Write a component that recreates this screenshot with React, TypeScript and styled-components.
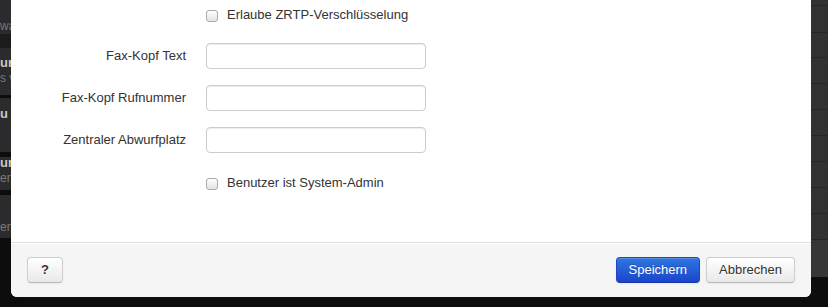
import React from "react";
import styled, { createGlobalStyle } from "styled-components";

const GlobalStyle = createGlobalStyle`
  html, body {
    margin: 0;
    padding: 0;
    width: 828px;
    height: 307px;
    overflow: hidden;
    background: #0d0d0d;
    font-family: "Liberation Sans", Arial, Helvetica, sans-serif;
  }
  * { box-sizing: border-box; }
`;

const Page = styled.div`
  display: flex;
  align-items: flex-start;
  width: 828px;
  height: 307px;
`;

/* ---------- background list behind the modal ---------- */
const LeftStrip = styled.div`
  width: 11px;
  flex: none;
  display: flex;
  flex-direction: column;
  overflow: hidden;
`;

const Band = styled.div<{ $h: number; $tone: "row" | "dark" | "black"; $pb?: number }>`
  height: ${(p) => p.$h}px;
  flex: none;
  background: ${(p) =>
    p.$tone === "row" ? "#2b2b2d" : p.$tone === "dark" ? "#1c1c1d" : "#0d0d0d"};
  display: flex;
  flex-direction: column;
  justify-content: flex-end;
  padding-bottom: ${(p) => p.$pb ?? 0}px;
  overflow: hidden;
  white-space: nowrap;
`;

const BandTitle = styled.div`
  font-size: 13px;
  font-weight: bold;
  line-height: 16px;
  color: #c8c8c8;
`;

const BandSub = styled.div`
  font-size: 12px;
  line-height: 15px;
  color: #7a7a7a;
`;

const RightStrip = styled.div`
  width: 17px;
  flex: none;
  display: flex;
  flex-direction: column;
`;

const ListRow = styled.div<{ $h: number }>`
  height: ${(p) => p.$h}px;
  background: #313132;
  border-bottom: 1px solid #262627;
`;

const ListFoot = styled.div`
  height: 37px;
  background: #363637;
`;

/* ---------- modal ---------- */
const Modal = styled.div`
  width: 800px;
  flex: none;
  background: #fff;
  border-radius: 0 0 6px 6px;
  display: flex;
  flex-direction: column;
  overflow: hidden;
`;

const Body = styled.div`
  height: 242px;
  padding: 6px 15px 0 15px;
  display: flex;
  flex-direction: column;
  color: #333;
  font-size: 13px;
`;

const CheckRow = styled.label<{ $mt: number }>`
  display: flex;
  align-items: center;
  gap: 9px;
  margin-top: ${(p) => p.$mt}px;
  padding-left: 180px;
  line-height: 18px;
  height: 18px;
  color: #333;
`;

const Box = styled.span`
  width: 12px;
  height: 12px;
  flex: none;
  border: 1px solid #a9a9a9;
  border-radius: 3px;
  background: linear-gradient(#ffffff, #e4e4e4);
  box-shadow: 0 1px 0 rgba(255, 255, 255, 0.6);
  margin-top: 1px;
`;

const FieldRow = styled.div<{ $mt: number }>`
  display: flex;
  align-items: center;
  margin-top: ${(p) => p.$mt}px;
  height: 26px;
`;

const Label = styled.div`
  width: 160px;
  margin-right: 20px;
  text-align: right;
  font-size: 13px;
  line-height: 26px;
  color: #333;
  white-space: nowrap;
`;

const Input = styled.input`
  width: 220px;
  height: 26px;
  padding: 4px 6px;
  border: 1px solid #cccccc;
  border-radius: 4px;
  background: #fff;
  box-shadow: inset 0 1px 1px rgba(0, 0, 0, 0.075);
  font-family: inherit;
  font-size: 13px;
  color: #555;
  outline: none;
`;

const Footer = styled.div`
  height: 55px;
  border-top: 1px solid #dddddd;
  background: #f5f5f5;
  box-shadow: inset 0 1px 0 #ffffff;
  padding: 14px 16px 14px 16px;
  display: flex;
  justify-content: space-between;
  align-items: flex-start;
`;

const Actions = styled.div`
  display: flex;
  gap: 6px;
`;

const Button = styled.button<{ $primary?: boolean; $bold?: boolean }>`
  height: 26px;
  padding: 0 12px;
  font-family: inherit;
  font-size: 13px;
  font-weight: ${(p) => (p.$bold ? "bold" : "normal")};
  line-height: 24px;
  border-radius: 4px;
  cursor: pointer;
  color: ${(p) => (p.$primary ? "#ffffff" : "#333333")};
  border: 1px solid ${(p) => (p.$primary ? "#1d46c4" : "#cfcfcf")};
  border-bottom-color: ${(p) => (p.$primary ? "#1538a8" : "#b8b8b8")};
  background: ${(p) =>
    p.$primary
      ? "linear-gradient(#2f76e0, #1a45cc)"
      : "linear-gradient(#ffffff, #e9e9e9)"};
  box-shadow: inset 0 1px 0 rgba(255, 255, 255, 0.2),
    0 1px 2px rgba(0, 0, 0, 0.05);
  text-shadow: ${(p) =>
    p.$primary ? "0 -1px 0 rgba(0,0,0,0.2)" : "0 1px 1px rgba(255,255,255,0.75)"};
`;

const HelpButton = styled(Button)`
  width: 36px;
  padding: 0;
`;

export default function App() {
  return (
    <>
      <GlobalStyle />
      <Page>
        <LeftStrip>
          <Band $h={34} $tone="row" $pb={0}>
            <BandSub>wa</BandSub>
          </Band>
          <Band $h={14} $tone="dark" />
          <Band $h={47} $tone="row" $pb={9}>
            <BandTitle>ur</BandTitle>
            <BandSub>s v</BandSub>
          </Band>
          <Band $h={3} $tone="black" />
          <Band $h={54} $tone="row" $pb={30}>
            <BandTitle>u</BandTitle>
          </Band>
          <Band $h={5} $tone="black" />
          <Band $h={33} $tone="row" $pb={4}>
            <BandTitle>ur</BandTitle>
            <BandSub>en</BandSub>
          </Band>
          <Band $h={5} $tone="black" />
          <Band $h={43} $tone="row" $pb={3}>
            <BandSub>en</BandSub>
          </Band>
        </LeftStrip>

        <Modal>
          <Body>
            <CheckRow $mt={0}>
              <Box />
              Erlaube ZRTP-Verschlüsselung
            </CheckRow>
            <FieldRow $mt={19}>
              <Label>Fax-Kopf Text</Label>
              <Input type="text" />
            </FieldRow>
            <FieldRow $mt={16}>
              <Label>Fax-Kopf Rufnummer</Label>
              <Input type="text" />
            </FieldRow>
            <FieldRow $mt={16}>
              <Label>Zentraler Abwurfplatz</Label>
              <Input type="text" />
            </FieldRow>
            <CheckRow $mt={21}>
              <Box />
              Benutzer ist System-Admin
            </CheckRow>
          </Body>
          <Footer>
            <HelpButton $bold>?</HelpButton>
            <Actions>
              <Button $primary>Speichern</Button>
              <Button>Abbrechen</Button>
            </Actions>
          </Footer>
        </Modal>

        <RightStrip>
          <ListRow $h={6} />
          <ListRow $h={27} />
          <ListRow $h={25} />
          <ListRow $h={26} />
          <ListRow $h={26} />
          <ListRow $h={26} />
          <ListRow $h={26} />
          <ListRow $h={26} />
          <ListRow $h={26} />
          <ListRow $h={26} />
          <ListFoot />
        </RightStrip>
      </Page>
    </>
  );
}
